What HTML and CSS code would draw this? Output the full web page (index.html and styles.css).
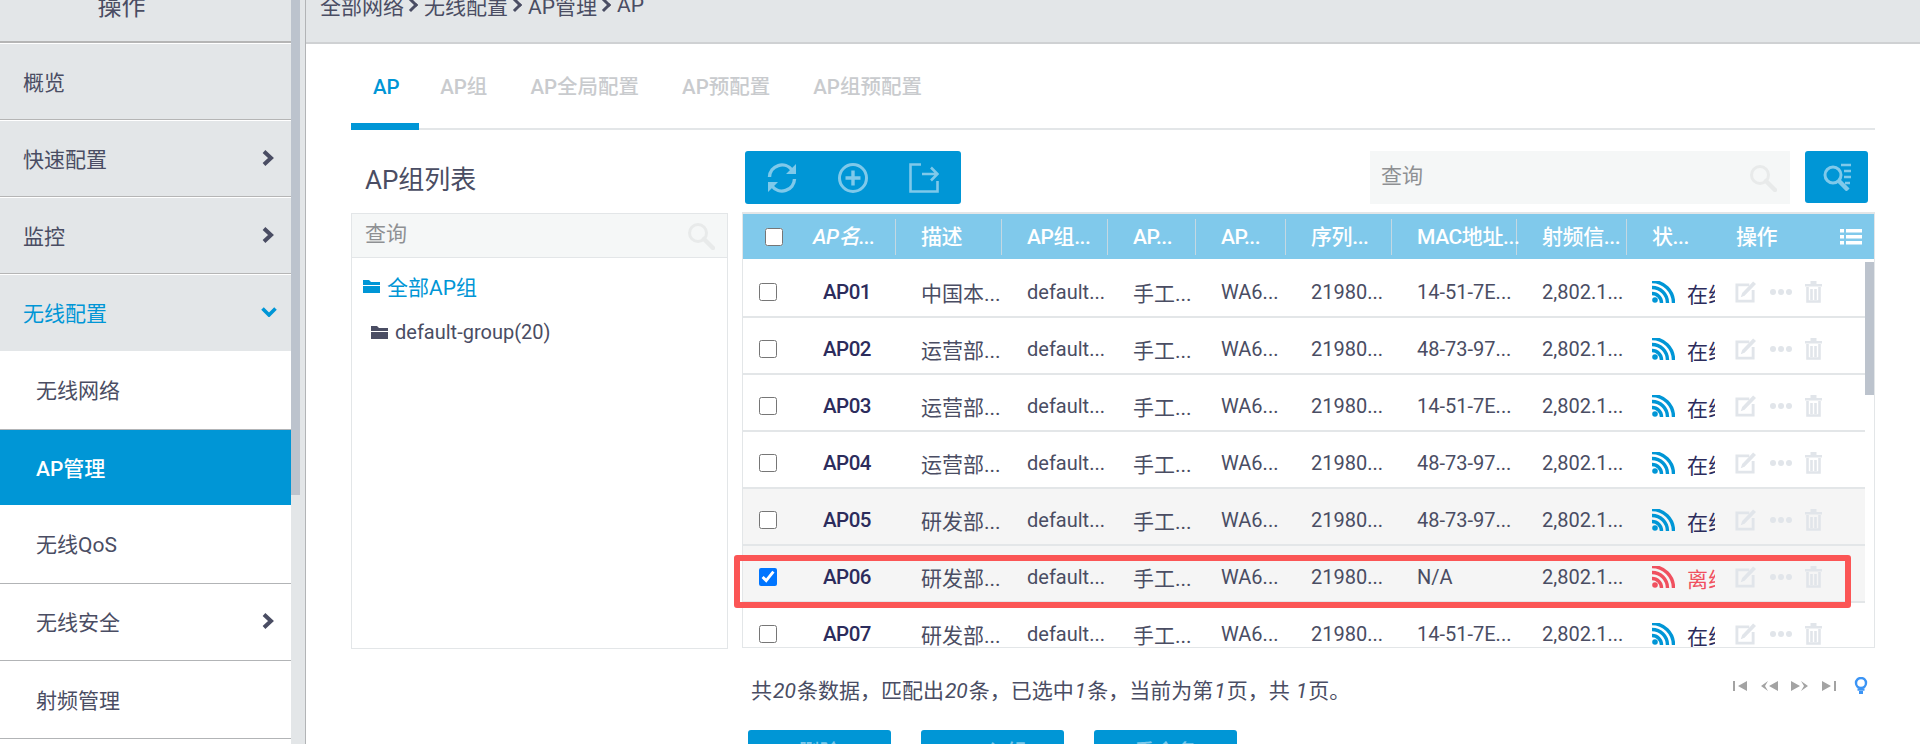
FILE: index.html
```html
<!DOCTYPE html>
<html lang="zh-CN">
  <head>
    <meta charset="UTF-8" />
    <title>AP管理</title>
    <link rel="stylesheet" href="styles.css">
  </head>
  <body>
    <svg class="defs" width="0" height="0">
      <symbol id="i-chev" viewBox="0 0 12 16"><path d="M2 1.500l7 6.500-7 6.500" fill="none" stroke="currentColor" stroke-width="4"/></symbol>
      <symbol id="i-chev-down" viewBox="0 0 16 10"><path d="M1.500 1.500L8 8l6.500-6.500" fill="none" stroke="currentColor" stroke-width="3.600"/></symbol>
      <symbol id="i-search" viewBox="0 0 28 28"><circle cx="11" cy="11" r="8.500" fill="none" stroke="currentColor" stroke-width="3"/><path d="M17 17l9 9" stroke="currentColor" stroke-width="4.500" stroke-linecap="round"/></symbol>
      <symbol id="i-folder" viewBox="0 0 17 14"><path d="M0 1h6l2 2h9v3H0zM0 7h17v7H0z" fill="currentColor"/></symbol>
      <symbol id="i-wifi" viewBox="0 0 23 22"><circle cx="3" cy="19" r="2.800" fill="currentColor"/><path d="M0 12.500A9.500 9.500 0 0 1 9.500 22M0 6.500A15.500 15.500 0 0 1 15.500 22M0 .5A21.500 21.500 0 0 1 21.500 22" fill="none" stroke="currentColor" stroke-width="3.400"/></symbol>
      <symbol id="i-edit" viewBox="0 0 22 22"><path d="M15 3.500H2v17h17V9" fill="none" stroke="currentColor" stroke-width="3"/><path d="M19 0l3 2.500L10 15l-4 1.500L7.500 12z" fill="currentColor"/></symbol>
      <symbol id="i-dots" viewBox="0 0 22 6"><circle cx="3" cy="3" r="3" fill="currentColor"/><circle cx="11" cy="3" r="3" fill="currentColor"/><circle cx="19" cy="3" r="3" fill="currentColor"/></symbol>
      <symbol id="i-trash" viewBox="0 0 17 22"><path d="M0 3h17v2.500H0zM5.500 0h6v3h-6z" fill="currentColor"/><path d="M2.500 6v14.500h12V6M6.500 8v11M10.500 8v11" fill="none" stroke="currentColor" stroke-width="2.600"/></symbol>
    </svg>

    <div class="page">
      <aside class="sidebar">
        <nav class="nav">
          <div class="nav-title">操作</div>
          <a class="nav-item">概览</a>
          <a class="nav-item">快速配置<svg class="chev"><use href="#i-chev"/></svg></a>
          <a class="nav-item">监控<svg class="chev"><use href="#i-chev"/></svg></a>
          <a class="nav-item nav-open">无线配置<svg class="chev-down"><use href="#i-chev-down"/></svg></a>
          <a class="nav-sub nav-tall">无线网络</a>
          <a class="nav-sub nav-active">AP管理</a>
          <a class="nav-sub nav-tall">无线QoS</a>
          <a class="nav-sub">无线安全<svg class="chev"><use href="#i-chev"/></svg></a>
          <a class="nav-sub nav-last">射频管理</a>
        </nav>
        <div class="nav-track"><div class="nav-thumb"></div></div>
      </aside>

      <main class="main">
        <div class="crumbs">
          全部网络<span class="sep"></span>无线配置<span class="sep"></span>AP管理<span class="sep"></span>AP
        </div>

        <div class="content">
          <ul class="tabs">
            <li class="tab tab-active">AP</li>
            <li class="tab">AP组</li>
            <li class="tab">AP全局配置</li>
            <li class="tab">AP预配置</li>
            <li class="tab">AP组预配置</li>
          </ul>

          <div class="columns">
            <section class="groups">
              <h2 class="groups-title">AP组列表</h2>
              <div class="groups-box">
                <div class="search search-groups">
                  <span>查询</span>
                  <svg class="search-icon"><use href="#i-search"/></svg>
                </div>
                <div class="tree">
                  <div class="tree-root"><svg class="folder"><use href="#i-folder"/></svg>全部AP组</div>
                  <div class="tree-leaf"><svg class="folder"><use href="#i-folder"/></svg>default-group(20)</div>
                </div>
              </div>
            </section>

            <section class="list">
              <div class="toolbar">
                <div class="tools">
                  <svg class="tool" viewBox="0 0 30 30" fill="none" stroke="currentColor" stroke-width="3.400">
                    <path d="M2.500 14A12.500 12.500 0 0 1 25 7M27.500 16A12.500 12.500 0 0 1 5 23"/>
                    <path d="M29 1v10H19z M1 29V19h10z" fill="currentColor" stroke="none"/>
                  </svg>
                  <svg class="tool" viewBox="0 0 30 30" fill="none" stroke="currentColor" stroke-width="3">
                    <circle cx="15" cy="15" r="13.500"/>
                    <path d="M15 7.500v15M7.500 15h15" stroke-width="3.400"/>
                  </svg>
                  <svg class="tool" viewBox="0 0 30 30" fill="none" stroke="currentColor" stroke-width="2.600">
                    <path d="M12 1.500H1.500v27h27V18"/>
                    <path d="M13 11h15M22 4.500l6.500 6.500-6.500 6.500"/>
                  </svg>
                </div>
                <div class="search search-table">
                  <span>查询</span>
                  <svg class="search-icon"><use href="#i-search"/></svg>
                </div>
                <button class="adv-btn">
                  <svg viewBox="0 0 28 28" width="28" height="28" fill="none" stroke="currentColor">
                    <circle cx="10" cy="12" r="8" stroke-width="3"/>
                    <path d="M16 18l9 9" stroke-width="4.500"/>
                    <path d="M18 2h10M21 8h7M21 14h7M22 20h5" stroke-width="2.400"/>
                  </svg>
                </button>
              </div>

              <div class="table">
                <div class="row-head">
                  <div class="cell-check"><input type="checkbox" class="check"></div>
                  <div class="th th-name">AP名...</div>
                  <div class="th">描述</div>
                  <div class="th">AP组...</div>
                  <div class="th">AP...</div>
                  <div class="th">AP...</div>
                  <div class="th">序列...</div>
                  <div class="th">MAC地址...</div>
                  <div class="th">射频信...</div>
                  <div class="th th-plain">状...</div>
                  <div class="th th-plain th-ops">操作</div>
                  <svg class="columns-icon" viewBox="0 0 22 16" fill="currentColor"><path d="M0 0h4v3.500H0zM6 0h16v3.500H6zM0 6h4v3.500H0zM6 6h16v3.500H6zM0 12h4v3.500H0zM6 12h16v3.500H6z"/></svg>
                </div>
                <div class="table-body">
                  <div class="rows" id="rows"></div>
                  <div class="table-scroll"></div>
                </div>
              </div>

              <div class="summary">
                <span>共<i>20</i>条数据&#65292;匹配出<i>20</i>条&#65292;已选中<i>1</i>条&#65292;当前为第<i>1</i>页&#65292;共 <i>1</i>页。</span>
                <div class="pager">
                  <svg class="pager-icon" viewBox="0 0 14 10" width="14" height="10"><path d="M0 0h2v10H0zM14 0v10L5 5z"/></svg>
                  <svg class="pager-icon" viewBox="0 0 18 10" width="18" height="10"><path d="M18 0v10L9 5zM8 0L1 5l7 5-3-5z"/></svg>
                  <svg class="pager-icon" viewBox="0 0 18 10" width="18" height="10"><path d="M0 0v10l9-5zM10 0l7 5-7 5 3-5z"/></svg>
                  <svg class="pager-icon" viewBox="0 0 14 10" width="14" height="10"><path d="M0 0v10l9-5zM12 0h2v10h-2z"/></svg>
                  <svg class="bulb" viewBox="0 0 14 18" width="14" height="18" fill="none" stroke="currentColor"><circle cx="7" cy="6" r="5" stroke-width="2.400"/><path d="M3.500 12.500h7" stroke-width="2.400"/><path d="M5 15.500h4" stroke-width="3"/></svg>
                </div>
              </div>

              <div class="actions">
                <button class="action">删除</button>
                <button class="action">AP入组</button>
                <button class="action">重命名</button>
              </div>
            </section>
          </div>
        </div>
      </main>
    </div>

    <div class="callout"></div>

    <script src="app.js"></script>
  </body>
</html>
```
FILE: app.js
```js
const aps = [
  ["AP01", "中国本...", "14-51-7E..."],
  ["AP02", "运营部...", "48-73-97..."],
  ["AP03", "运营部...", "14-51-7E..."],
  ["AP04", "运营部...", "48-73-97..."],
  ["AP05", "研发部...", "48-73-97..."],
  ["AP06", "研发部...", "N/A"],
  ["AP07", "研发部...", "14-51-7E..."],
];

const rows = document.getElementById("rows");

aps.forEach(([name, desc, mac]) => {
  const offline = name === "AP06";
  const row = document.createElement("div");
  row.className = "row";
  if (name === "AP05") row.classList.add("row-gray");
  if (offline) row.classList.add("row-gray", "row-off");

  row.innerHTML = `
    <div class="cell-check"><input type="checkbox" class="check" ${offline ? "checked" : ""}></div>
    <div class="td td-name">${name}</div>
    <div class="td">${desc}</div>
    <div class="td td-latin">default...</div>
    <div class="td">手工...</div>
    <div class="td td-latin">WA6...</div>
    <div class="td td-latin">21980...</div>
    <div class="td td-latin">${mac}</div>
    <div class="td td-latin">2,802.1...</div>
    <div class="td-status">
      <svg class="wifi"><use href="#i-wifi"/></svg>
      <span class="status-text">${offline ? "离线" : "在线"}</span>
    </div>
    <div class="td-ops">
      <svg class="op-edit"><use href="#i-edit"/></svg>
      <svg class="op-dots"><use href="#i-dots"/></svg>
      <svg class="op-trash"><use href="#i-trash"/></svg>
    </div>`;
  rows.appendChild(row);
});
```
FILE: styles.css
```css
* {
  margin: 0;
  padding: 0;
  box-sizing: border-box;
}
html,
body {
  height: 744px;
  overflow: hidden;
  background: #fff;
}
body {
  font-family: Roboto, "Noto Sans CJK SC", sans-serif;
  font-size: 21px;
  color: #4a4d63;
}
.defs {
  position: absolute;
}
/* the page is scrolled down a little in the shot */
.page {
  display: flex;
  margin-top: -30px;
  height: 804px;
}

/* left nav */
.sidebar {
  display: flex;
  width: 306px;
  flex: none;
  border-right: 1px solid #b2b4b6;
}
.nav {
  width: 291px;
  flex: none;
}
.nav-track {
  flex: 1;
  background: #e3e6e8;
}
.nav-thumb {
  width: 9px;
  height: 525px;
  background: #bcc3cd;
}
.nav-title {
  height: 73px;
  padding: 18px 48px 0 0;
  background: #e3e6e8;
  text-align: center;
  border-bottom: 2px solid #b5b5b5;
  line-height: 38px;
  font-size: 24px;
}
.nav-item,
.nav-sub {
  display: flex;
  align-items: center;
  justify-content: space-between;
  height: 77px;
  padding: 0 17px 2px 23px;
  border-bottom: 1px solid #b2b4b6;
}
.nav-item {
  background: #e3e6e8;
  border-top: 1px solid #fff;
  border-bottom: 1px solid #b5b5b5;
}
.nav-open {
  color: #0096d6;
  border-bottom: 0;
}
.nav-sub {
  padding-left: 36px;
  background: #fff;
}
.nav-tall {
  height: 79px;
}
.nav-active {
  height: 75px;
  background: #0096d6;
  color: #fff;
  font-weight: 500;
  border-bottom: 0;
}
.nav-last {
  height: 78px;
}
.chev {
  width: 12px;
  height: 16px;
  color: #4a4d63;
}
.chev-down {
  width: 16px;
  height: 10px;
  margin-right: -3px;
  color: #0096d6;
}

/* top crumb */
.main {
  flex: 1;
  min-width: 0;
}
.crumbs {
  display: flex;
  align-items: center;
  height: 74px;
  padding: 0 0 2px 14px;
  background: #e3e6e8;
  border-bottom: 2px solid #cfd1d3;
  font-size: 21px;
}
.sep {
  width: 10px;
  height: 10px;
  margin: 0 8px 0 2px;
  border-top: 3px solid #4a4d63;
  border-right: 3px solid #4a4d63;
  transform: rotate(45deg);
}
.content {
  padding: 0 45px 0 45px;
}

/* tabs */
.tabs {
  display: flex;
  list-style: none;
  height: 86px;
  border-bottom: 2px solid #e3e6e8;
  font-size: 20.5px;
}
.tab {
  padding: 0 21.5px;
  line-height: 86px;
  font-weight: 500;
  color: #c9cbce;
}
.tab-active {
  padding: 0 19px 0 22px;
  color: #0096d6;
  border-bottom: 7px solid #0096d6;
  height: 86px;
}

.columns {
  display: flex;
  gap: 14px;
}

/* AP group panel */
.groups {
  width: 377px;
  flex: none;
}
.groups-title {
  height: 83px;
  padding: 30px 0 0 14px;
  font-size: 26px;
  font-weight: 400;
  line-height: 40px;
}
.groups-box {
  height: 436px;
  border: 1px solid #e3e6e8;
  border-top: 0;
}
.search {
  display: flex;
  align-items: center;
  justify-content: space-between;
  background: #f5f7f7;
  color: #8e9093;
}
.search span {
  margin-bottom: 8px;
}
.search-groups {
  height: 45px;
  margin: 0 -1px;
  padding: 0 12px 0 13px;
  border: 1px solid #e3e6e8;
}
.search-icon {
  width: 28px;
  height: 28px;
  color: #e8eaea;
}
.tree {
  padding: 5px 0 0 11px;
}
.tree-root,
.tree-leaf {
  display: flex;
  align-items: center;
  height: 46px;
}
.tree-root {
  color: #0096d6;
}
.tree-leaf {
  padding-left: 8px;
  font-size: 20px;
}
.folder {
  width: 17px;
  height: 14px;
  margin-right: 7px;
}

/* AP table */
.list {
  flex: 1;
  min-width: 0;
}
.toolbar {
  display: flex;
  align-items: flex-start;
  height: 83px;
  padding: 21px 7px 0 3px;
}
.tools {
  display: flex;
  align-items: center;
  justify-content: center;
  gap: 41px;
  width: 216px;
  height: 53px;
  background: #0096d6;
  border-radius: 3px;
  color: #7fc9ea;
}
.tool {
  width: 30px;
  height: 30px;
}
.search-table {
  width: 420px;
  height: 53px;
  margin-left: auto;
  padding: 0 13px 0 11px;
}
.adv-btn {
  display: flex;
  align-items: center;
  justify-content: center;
  width: 63px;
  height: 52px;
  margin-left: 15px;
  background: #0096d6;
  border: 0;
  border-radius: 3px;
  color: #7fc9ea;
}
.table {
  height: 436px;
  border: 1px solid #e3e6e8;
  border-top: 2px solid #e3e6e8;
  margin-top: -1px;
  overflow: hidden;
}
.row-head,
.row {
  display: grid;
  grid-template-columns: 51px 102px 106px 106px 88px 90px 106px 125px 110px 100px 147px;
  align-items: center;
}
.row-head {
  position: relative;
  height: 45px;
  background: #80c9eb;
  color: #fff;
  font-weight: 500;
}
.row {
  height: 57px;
  padding-top: 6px;
  border-bottom: 2px solid #e3e6e8;
}
.row-gray {
  background: #f5f5f5;
}
.cell-check {
  padding-left: 22px;
  display: flex;
}
.row .cell-check {
  padding-left: 16px;
}
.check {
  appearance: auto;
  width: 18px;
  height: 18px;
  accent-color: #0075ff;
}
.th,
.td {
  padding-left: 25px;
  white-space: nowrap;
}
.th {
  height: 36px;
  line-height: 36px;
  border-right: 1px solid #c4d8e2;
  letter-spacing: -0.4px;
}
.th-name {
  padding-left: 19px;
  font-style: italic;
}
.th-plain {
  border-right: 0;
}
.th-ops {
  padding-left: 9px;
}
.columns-icon {
  position: absolute;
  right: 12px;
  top: 15px;
  width: 22px;
  height: 16px;
  color: #fff;
}
.td-latin {
  font-size: 20px;
}
.td-name {
  padding-left: 29px;
  font-size: 20.5px;
  letter-spacing: -0.5px;
  color: #2c2c5c;
  font-weight: 500;
}
.table-body {
  display: flex;
  height: 389px;
  padding-top: 2px;
  overflow: hidden;
}
.rows {
  flex: 1;
  min-width: 0;
}
.table-scroll {
  width: 9px;
  height: 133px;
  margin-top: 1px;
  background: #bcc3cd;
}
.td-status {
  display: flex;
  align-items: center;
  padding-left: 25px;
  overflow: hidden;
  color: #2c2c5c;
}
.wifi {
  width: 23px;
  height: 22px;
  flex: none;
  color: #0096d6;
}
.status-text {
  width: 28px;
  flex: none;
  margin: 6px 0 0 12px;
  overflow: hidden;
  white-space: nowrap;
  line-height: 24px;
}
.row-off .wifi,
.row-off .status-text {
  color: #f0505f;
}
.td-ops {
  display: flex;
  align-items: center;
  padding-left: 8px;
  color: #e1e5ea;
}
.op-edit {
  width: 21px;
  height: 22px;
  margin-right: 14px;
}
.op-dots {
  width: 22px;
  height: 6px;
  margin-right: 13px;
}
.op-trash {
  width: 17px;
  height: 22px;
}

/* under the table */
.summary {
  display: flex;
  align-items: center;
  justify-content: space-between;
  height: 82px;
  padding: 0 7px 0 9px;
}
.summary i {
  padding: 0 1px;
}
.pager {
  display: flex;
  align-items: center;
  gap: 13px;
  margin-top: -6px;
}
.pager-icon {
  fill: #a3a3a3;
}
.bulb {
  margin-left: 5px;
  color: #3b94f5;
}
.actions {
  display: flex;
  gap: 30px;
  padding-left: 6px;
}
.action {
  width: 143px;
  height: 40px;
  background: #0096d6;
  border: 0;
  border-radius: 3px;
  color: #7fc9ea;
  font: 500 21px Roboto, "Noto Sans CJK SC", sans-serif;
}

/* red annotation drawn over the screenshot */
.callout {
  position: absolute;
  left: 734px;
  top: 555px;
  width: 1117px;
  height: 53px;
  border: 6px solid #fb5555;
  border-radius: 3px;
}
```
